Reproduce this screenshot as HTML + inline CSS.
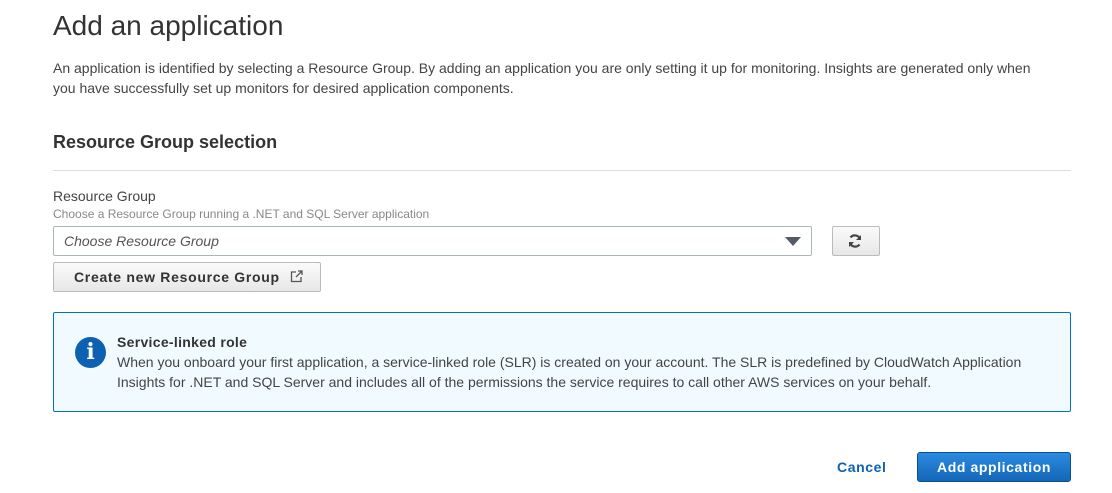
<!DOCTYPE html>
<html><head><style>
*{box-sizing:border-box;margin:0;padding:0}
body{width:1112px;height:493px;background:#fff;font-family:"Liberation Sans",Arial,sans-serif;color:#444;position:relative;overflow:hidden}
.a{position:absolute}
</style></head><body>
<div class="a" style="left:53px;top:10px;font-size:28px;color:#333">Add an application</div>
<div class="a" style="left:53px;top:58px;font-size:14px;line-height:20px;color:#444;width:1000px">An application is identified by selecting a Resource Group. By adding an application you are only setting it up for monitoring. Insights are generated only when you have successfully set up monitors for desired application components.</div>
<div class="a" style="left:53px;top:132px;font-size:18px;font-weight:bold;color:#333">Resource Group selection</div>
<div class="a" style="left:53px;top:170px;width:1018px;height:1px;background:#ddd"></div>
<div class="a" style="left:53px;top:188px;font-size:14px;color:#444">Resource Group</div>
<div class="a" style="left:53px;top:207px;font-size:12px;color:#888">Choose a Resource Group running a .NET and SQL Server application</div>
<div class="a" style="left:53px;top:226px;width:759px;height:30px;border:1px solid #aab7b8;border-radius:2px;"></div>
<div class="a" style="left:64px;top:233px;font-size:14px;font-style:italic;color:#555">Choose Resource Group</div>
<div class="a" style="left:785px;top:237px;width:0;height:0;border-left:8px solid transparent;border-right:8px solid transparent;border-top:9px solid #545b64"></div>
<div class="a" style="left:832px;top:226px;width:48px;height:30px;border:1px solid #bbb;border-radius:2px;background:linear-gradient(#fafafa,#e7e7e7)"></div>
<svg class="a" style="left:847px;top:233px" width="16" height="16" viewBox="0 0 16 16"><path d="M13 6A5.5 5.5 0 0 0 3.5 4.5M3 10a5.5 5.5 0 0 0 9.5 1.5" fill="none" stroke="#444" stroke-width="2.2"/><path d="M14 2v5h-5z M2 14v-5h5z" fill="#444"/></svg>
<div class="a" style="left:53px;top:262px;width:268px;height:30px;border:1px solid #bbb;border-radius:2px;background:linear-gradient(#fafafa,#e7e7e7);font-size:14px;font-weight:bold;color:#333;padding:6px 0 0 20px;letter-spacing:0.7px">Create new Resource Group</div>
<svg class="a" style="left:290px;top:270px" width="13" height="13" viewBox="0 0 13 13"><path d="M6 2H1.5v9.5H11V7M8 1h4v4M12 1L6 7" fill="none" stroke="#555" stroke-width="1.3"/></svg>
<div class="a" style="left:53px;top:312px;width:1018px;height:100px;border:1px solid #0073bb;background:#f1faff;border-radius:2px"></div>
<div class="a" style="left:75px;top:337px;width:31px;height:31px;border-radius:50%;background:#0d61b0;color:#fff;font-weight:bold;font-family:'DejaVu Serif',serif;font-size:22px;text-align:center;line-height:31px">i</div>
<div class="a" style="left:117px;top:334px;font-size:14px;font-weight:bold;color:#333;letter-spacing:0.3px">Service-linked role</div>
<div class="a" style="left:117px;top:352px;font-size:14px;line-height:20px;color:#444;width:940px">When you onboard your first application, a service-linked role (SLR) is created on your account. The SLR is predefined by CloudWatch Application Insights for .NET and SQL Server and includes all of the permissions the service requires to call other AWS services on your behalf.</div>
<div class="a" style="left:837px;top:459px;font-size:14px;font-weight:bold;color:#0d61b0;letter-spacing:0.6px">Cancel</div>
<div class="a" style="left:917px;top:452px;width:154px;height:30px;border:1px solid #0d4f8c;border-radius:3px;background:linear-gradient(#2a8be0,#1466b8);color:#fff;font-size:14px;font-weight:bold;text-align:center;line-height:28px;letter-spacing:0.6px">Add application</div>
</body></html>
